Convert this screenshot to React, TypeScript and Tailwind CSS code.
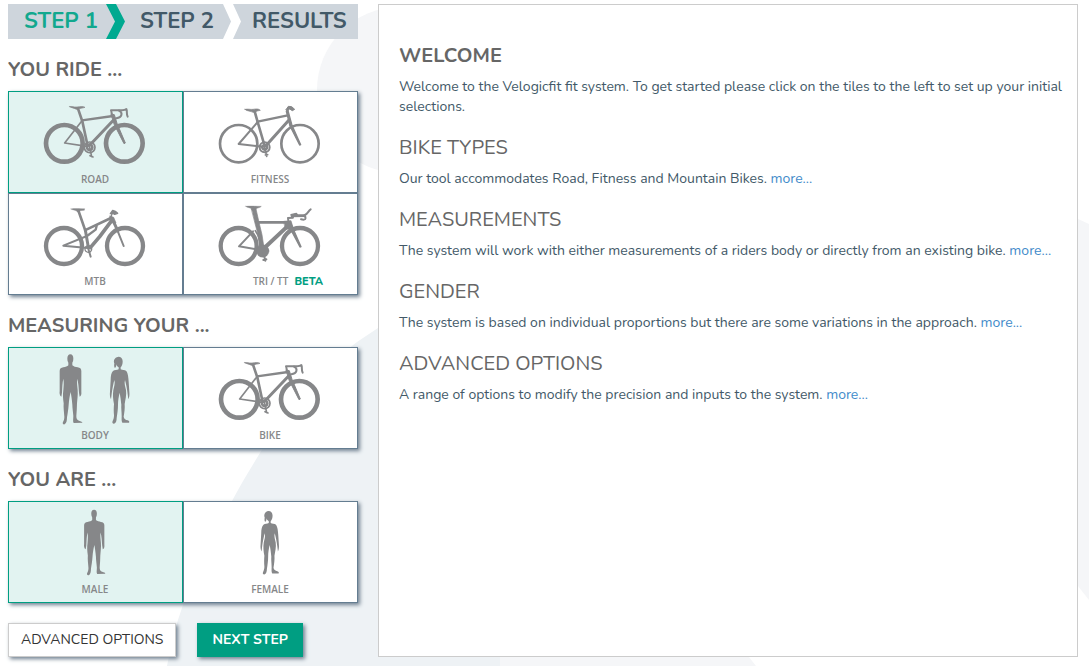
import { useState, type ReactNode } from "react";
import clsx from "clsx";

type TileData = { id: string; label: string; art: ReactNode; beta?: boolean };

function Art({ viewBox, children }: { viewBox: string; children: ReactNode }) {
  return (
    <svg
      viewBox={viewBox}
      className="h-[75px] w-[120px]"
      fill="none"
      stroke="#868789"
      strokeLinecap="round"
      strokeLinejoin="round"
      aria-hidden="true"
    >
      {children}
    </svg>
  );
}

function RoadBike() {
  return (
    <Art viewBox="106 30 360 225">
      <circle cx="194" cy="172" r="55" strokeWidth="14" />
      <circle cx="374" cy="172" r="55" strokeWidth="14" />
      <path d="M247 104 195 171 262 181" strokeWidth="5" />
      <path d="M235 68 248 106 264 180" strokeWidth="8" />
      <path d="M247 103 340 90" strokeWidth="7" />
      <path d="M344 100 270 178" strokeWidth="9" />
      <path d="M335 76 338 92" strokeWidth="6" />
      <path d="M335 84 344 86 352 112 377 171 373 173 344 116Z" fill="#868789" strokeWidth="3" />
      <path d="M210 62C217 60 222 64 232 63 242 62 250 60 256 64 248 67 240 66 237 70L230 70C225 66 214 66 210 62Z" fill="#868789" strokeWidth="2" />
      <path d="M334 73 358 73C366 71 372 75 380 69 384 78 379 82 384 92" strokeWidth="6" />
      <path d="M358 74C370 80 368 94 350 97" strokeWidth="6" />
      <circle cx="270" cy="184" r="16" strokeWidth="5" />
      <circle cx="270" cy="184" r="8" strokeWidth="8" strokeDasharray="5 3" />
      <path d="M270 184 276 212M271 209 280 213" strokeWidth="5" />
    </Art>
  );
}

function FitnessBike() {
  return (
    <Art viewBox="91 30 360 225">
      <circle cx="177" cy="173" r="56" strokeWidth="8" />
      <circle cx="361" cy="173" r="56" strokeWidth="8" />
      <path d="M234 108 177 174 250 182" strokeWidth="6" />
      <path d="M225 76 234 108 255 180" strokeWidth="8" />
      <path d="M234 107 324 88" strokeWidth="7" />
      <path d="M328 102 260 178" strokeWidth="9" />
      <path d="M320 76 325 74 337 118 363 176 360 177 331 120Z" fill="#868789" strokeWidth="4" />
      <path d="M196 70C206 68 212 71 220 70 230 68 238 68 242 73 234 75 229 75 227 79L220 79C214 75 200 76 196 70Z" fill="#868789" strokeWidth="2" />
      <path d="M319 71 326 61 336 62 345 70 338 74 330 69 324 75Z" fill="#868789" strokeWidth="3" />
      <circle cx="255" cy="184" r="15" strokeWidth="6" />
      <circle cx="255" cy="184" r="7" strokeWidth="8" strokeDasharray="6 3" />
      <path d="M255 184 261 211M257 207 264 206" strokeWidth="5" />
    </Art>
  );
}

function MountainBike() {
  return (
    <Art viewBox="106 24 360 225">
      <circle cx="193" cy="168" r="54" strokeWidth="13" />
      <circle cx="376" cy="168" r="54" strokeWidth="13" />
      <path d="M262 138 191 167 264 174" strokeWidth="6" />
      <path d="M237 64 257 122" strokeWidth="8" />
      <path d="M257 120 266 172" strokeWidth="9" />
      <path d="M260 119 334 84" strokeWidth="8" />
      <path d="M262 138 288 119 291 108" strokeWidth="7" />
      <path d="M336 92 300 140 272 173" strokeWidth="11" />
      <path d="M331 78 342 82 349 99 333 98Z" fill="#868789" strokeWidth="2" />
      <path d="M343 98 354 122" strokeWidth="9" />
      <path d="M352 118 372 168" strokeWidth="6" />
      <path d="M214 57C225 54 240 57 255 56L254 61 241 62 239 67 233 66C230 60 220 61 214 57Z" fill="#868789" strokeWidth="1" />
      <path d="M334 80 337 72M332 71 339 61 347 64 354 70 345 73 340 70Z" fill="#868789" strokeWidth="4" />
      <circle cx="266" cy="177" r="10" strokeWidth="4" strokeDasharray="6 2" />
      <path d="M266 177 273 200" strokeWidth="6" />
    </Art>
  );
}

function TriBike() {
  return (
    <Art viewBox="91 24 360 225">
      <circle cx="177" cy="168" r="54" strokeWidth="13" />
      <circle cx="361" cy="168" r="54" strokeWidth="13" />
      <path d="M220 124 178 169 244 180" strokeWidth="6" />
      <path d="M216 57 229 57 238 97 247 134 254 180 242 180 235 134 226 100Z" fill="#868789" strokeWidth="2" />
      <path d="M227 122C237 136 241 150 241 168" strokeWidth="5" />
      <path d="M232 97 322 97" strokeWidth="8" />
      <path d="M320 112 254 174" strokeWidth="12" />
      <path d="M313 94 334 92 341 116 318 118Z" fill="#868789" strokeWidth="2" />
      <path d="M333 98 341 118 364 170 361 171 334 120Z" fill="#868789" strokeWidth="4" />
      <path d="M198 49C212 47 230 49 245 49 242 54 232 53 229 58L216 59C214 52 202 54 198 49Z" fill="#868789" strokeWidth="1" />
      <path d="M326 92 325 84 340 83" strokeWidth="6" />
      <path d="M334 74 350 70 354 75 375 75 378 79 336 80Z" fill="#868789" strokeWidth="4" />
      <path d="M374 76C384 74 386 62 393 58M376 80C380 86 378 91 364 88" strokeWidth="6" />
      <circle cx="249" cy="183" r="19" fill="#868789" strokeWidth="1" />
      <path d="M250 184 257 212M251 210 260 208" strokeWidth="6" />
    </Art>
  );
}

const MAN =
  "M212 43C218 43 221 48 221 56 221 61 220 65 218 68L218 76C222 80 228 81 234 82 241 83 245 86 245 93L245 155C246 162 244 168 240 170L238 158C237 142 236 128 233 116 231 126 233 138 234 150 235 165 233 178 232 190 232 203 231 215 230 228 230 236 232 239 238 242 244 244 248 245 248 248L222 249C219 245 221 236 221 228 220 215 218 204 218 194 217 180 215 168 213 156 210 168 208 180 207 194 206 208 204 220 202 232 202 240 201 250 195 253 190 254 188 250 190 246 193 241 194 236 194 230 193 215 191 203 192 190 190 176 189 164 191 150 192 138 193 128 191 116 188 128 188 142 187 158L185 170C180 167 179 160 180 153L180 93C180 86 184 83 191 82 198 81 203 79 206 76L206 68C204 65 203 61 203 56 203 48 206 43 212 43Z";

const WOMAN =
  "M356 50C364 50 369 56 369 64 369 72 367 78 363 82L363 88C368 90 375 90 380 93 385 100 386 112 387 125L389 155C390 165 389 172 386 178L384 162C382 145 379 132 376 120 373 130 377 140 379 150 381 165 377 180 375 192 376 205 374 218 372 230 373 237 378 239 384 241 389 243 390 246 388 248L368 248C365 243 366 236 366 228 366 214 364 204 365 194 364 182 362 170 360 158 357 170 355 182 355 194 355 208 353 220 351 234 351 242 349 250 343 251 338 251 337 247 339 243 342 238 343 232 343 226 342 214 342 204 343 192 340 178 339 164 341 150 343 140 347 130 344 120 341 132 338 146 336 162L334 178C331 172 330 164 331 155L333 120C333 108 335 98 340 93 345 90 352 90 357 88L357 82C353 80 351 77 350 73 350 78 349 82 346 84 343 82 343 76 344 70 341 64 343 52 356 50Z";

function Bodies() {
  return (
    <Art viewBox="106 36 360 225">
      <path d={MAN} fill="#868789" stroke="none" />
      <path d={WOMAN} fill="#868789" stroke="none" />
    </Art>
  );
}

function Male() {
  return (
    <Art viewBox="106 48 360 225">
      <path d={MAN} fill="#868789" stroke="none" transform="translate(85 19) scale(.935)" />
    </Art>
  );
}

function Female() {
  return (
    <Art viewBox="91 48 360 225">
      <path d={WOMAN} fill="#868789" stroke="none" transform="translate(-70 16) scale(.945)" />
    </Art>
  );
}

function TileGroup({ title, tiles }: { title: string; tiles: TileData[] }) {
  const [selected, setSelected] = useState(tiles[0].id);
  return (
    <section>
      <h2 className="pt-5 pb-2.5 text-[20px] leading-[22px] font-bold text-[#666]">{title}</h2>
      <div className="grid grid-cols-2 bg-white shadow-[2px_2px_4px_#708090]">
        {tiles.map((tile) => (
          <button
            key={tile.id}
            type="button"
            aria-pressed={selected === tile.id}
            onClick={() => setSelected(tile.id)}
            className={clsx(
              "flex h-[102px] flex-col items-center border pt-1 pr-px",
              selected === tile.id ? "border-[#009e82] bg-[#e2f3f1]" : "border-[#647d91] bg-white",
            )}
          >
            {tile.art}
            <span className="flex items-baseline gap-1.5 font-['Open_Sans',sans-serif] text-[10px] leading-4 font-semibold text-[#868789]">
              {tile.beta && <span className="w-[30px]" />}
              <span>{tile.label}</span>
              {tile.beta && (
                <span className="font-[Nunito,sans-serif] text-[11px] font-extrabold text-[#009e82]">BETA</span>
              )}
            </span>
          </button>
        ))}
      </div>
    </section>
  );
}

function Steps() {
  return (
    <ol className="flex h-[35px] items-center bg-[#ced5dc] text-[22px] leading-[35px] font-bold text-[#425968]">
      <li aria-current="step" className="w-[98px] pl-4 text-[#12a88e]">
        STEP 1
      </li>
      <li aria-hidden="true">
        <svg viewBox="0 0 19 35" className="h-[35px] w-[19px]" fill="#00a990">
          <path d="M0 0H10L19 17.5 10 35H0L9 17.5Z" />
        </svg>
      </li>
      <li className="w-[98px] pl-[15px]">STEP 2</li>
      <li aria-hidden="true">
        <svg viewBox="0 0 19 35" className="h-[35px] w-[19px]" fill="#fff">
          <path d="M0 0H10L18 17.5 10 35H0L8 17.5Z" />
        </svg>
      </li>
      <li className="pl-2.5">RESULTS</li>
    </ol>
  );
}

const RIDES: TileData[] = [
  { id: "road", label: "ROAD", art: <RoadBike /> },
  { id: "fitness", label: "FITNESS", art: <FitnessBike /> },
  { id: "mtb", label: "MTB", art: <MountainBike /> },
  { id: "tri", label: "TRI / TT", art: <TriBike />, beta: true },
];
const MEASURES: TileData[] = [
  { id: "body", label: "BODY", art: <Bodies /> },
  { id: "bike", label: "BIKE", art: <RoadBike /> },
];
const GENDERS: TileData[] = [
  { id: "male", label: "MALE", art: <Male /> },
  { id: "female", label: "FEMALE", art: <Female /> },
];

const TOPICS = [
  { title: "BIKE TYPES", text: "Our tool accommodates Road, Fitness and Mountain Bikes." },
  {
    title: "MEASUREMENTS",
    text: "The system will work with either measurements of a riders body or directly from an existing bike.",
  },
  {
    title: "GENDER",
    text: "The system is based on individual proportions but there are some variations in the approach.",
  },
  { title: "ADVANCED OPTIONS", text: "A range of options to modify the precision and inputs to the system." },
];

function Backdrop() {
  return (
    <svg
      className="absolute top-0 left-0 -z-10 h-[666px] w-[1089px]"
      viewBox="0 0 1089 666"
      aria-hidden="true"
    >
      <circle cx="400" cy="90" r="83" fill="#f5f6f8" />
      <path d="M1040 205 1078 219 1089 224V600L1078 586 1040 550Z" fill="#f5f6f8" />
      <path d="M560 400 749 657 756 666H400Z" fill="#f5f6f8" />
      <path d="M167 666C171 645 176 624 183 605 200 562 212 540 232 501 256 456 300 385 357 342L378 328 500 300V666Z" fill="#eef2f5" />
    </svg>
  );
}

export default function App() {
  return (
    <div className="relative isolate min-h-screen overflow-hidden bg-white font-[Nunito,Lato,sans-serif] text-[14px] leading-5 text-[#425968]">
      <Backdrop />
      <div className="flex gap-5 pt-1 pr-[11px] pb-[9px] pl-2">
        <div className="w-[350px] shrink-0">
          <Steps />
          <TileGroup title="YOU RIDE ..." tiles={RIDES} />
          <TileGroup title="MEASURING YOUR ..." tiles={MEASURES} />
          <TileGroup title="YOU ARE ..." tiles={GENDERS} />
          <div className="flex gap-[21px] pt-5">
            <button
              type="button"
              className="h-[34px] border border-[#ccc] bg-white px-3 text-[#333] shadow-[2px_2px_4px_#708090]"
            >
              ADVANCED OPTIONS
            </button>
            <button
              type="button"
              className="h-[34px] bg-[#009e82] px-[15px] font-bold text-white shadow-[2px_2px_4px_#708090]"
            >
              NEXT STEP
            </button>
          </div>
        </div>
        <main className="min-w-0 flex-1 border border-[#ccc] bg-white py-5 pr-2.5 pl-5">
          <h1 className="pt-5 pb-2.5 text-[20px] leading-[22px] font-bold text-[#666]">WELCOME</h1>
          <p>
            Welcome to the Velogicfit fit system. To get started please click on the tiles to the left to set up your
            initial selections.
          </p>
          {TOPICS.map((topic) => (
            <section key={topic.title}>
              <h2 className="pt-5 pb-2.5 text-[20px] leading-[22px] text-[#666]">{topic.title}</h2>
              <p>
                {topic.text}{" "}
                <a href="#more" className="text-[#428bca]">
                  more...
                </a>
              </p>
            </section>
          ))}
        </main>
      </div>
    </div>
  );
}
